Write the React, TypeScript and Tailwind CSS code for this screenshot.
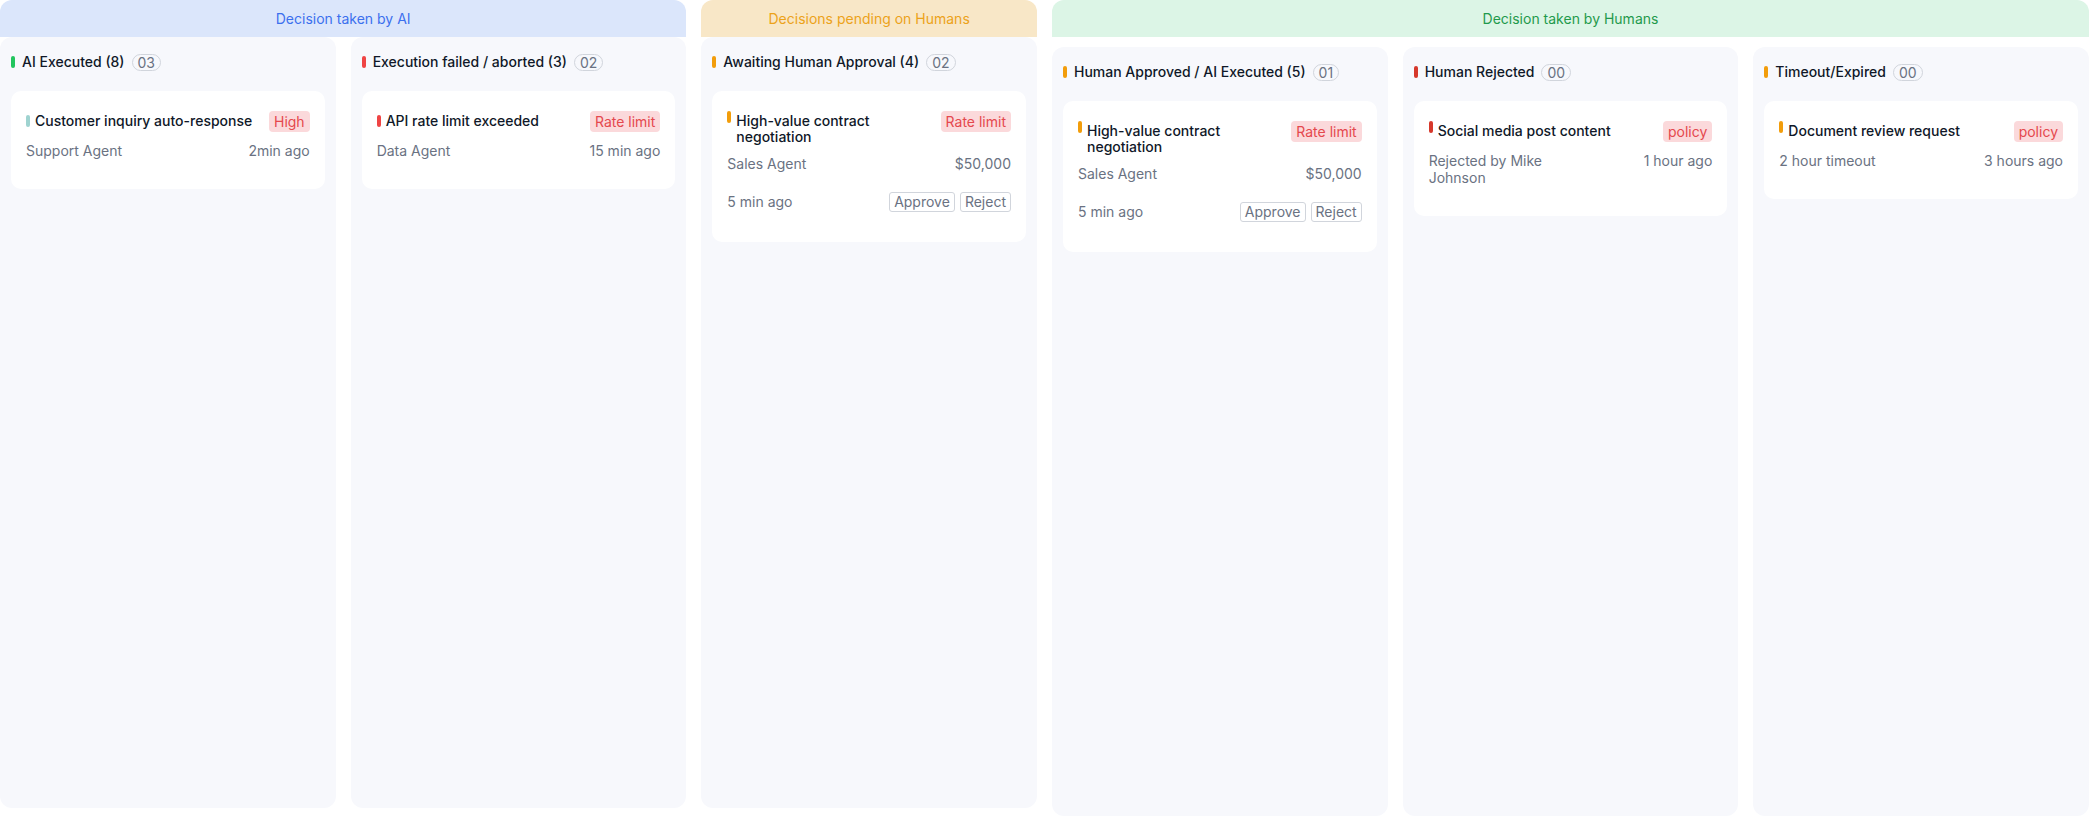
import React from 'react';

type Card = {
  title: string;
  bar: string;
  badge: string;
  left: string;
  right: string;
  centerBar?: boolean;
  actions?: boolean;
};

type Column = {
  title: string;
  count: string;
  bar: string;
  cards: Card[];
};

const contractCard: Card = {
  title: 'High-value contract negotiation',
  bar: 'bg-[#f29d0b]',
  badge: 'Rate limit',
  left: 'Sales Agent',
  right: '$50,000',
  actions: true,
};

const aiColumns: Column[] = [
  {
    title: 'AI Executed (8)',
    count: '03',
    bar: 'bg-[#22c55e]',
    cards: [
      {
        title: 'Customer inquiry auto-response',
        bar: 'bg-[#9fd3d0]',
        badge: 'High',
        left: 'Support Agent',
        right: '2min ago',
        centerBar: true,
      },
    ],
  },
  {
    title: 'Execution failed / aborted (3)',
    count: '02',
    bar: 'bg-[#ef4444]',
    cards: [
      {
        title: 'API rate limit exceeded',
        bar: 'bg-[#ef4444]',
        badge: 'Rate limit',
        left: 'Data Agent',
        right: '15 min ago',
        centerBar: true,
      },
    ],
  },
];

const pendingColumns: Column[] = [
  { title: 'Awaiting Human Approval (4)', count: '02', bar: 'bg-[#f29d0b]', cards: [contractCard] },
];

const humanColumns: Column[] = [
  { title: 'Human Approved / AI Executed (5)', count: '01', bar: 'bg-[#f29d0b]', cards: [contractCard] },
  {
    title: 'Human Rejected',
    count: '00',
    bar: 'bg-[#d6382b]',
    cards: [
      {
        title: 'Social media post content',
        bar: 'bg-[#d6382b]',
        badge: 'policy',
        left: 'Rejected by Mike Johnson',
        right: '1 hour ago',
      },
    ],
  },
  {
    title: 'Timeout/Expired',
    count: '00',
    bar: 'bg-[#f29d0b]',
    cards: [
      {
        title: 'Document review request',
        bar: 'bg-[#f29d0b]',
        badge: 'policy',
        left: '2 hour timeout',
        right: '3 hours ago',
      },
    ],
  },
];

const TaskCard = ({ card }: { card: Card }) => (
  <div className="rounded-[10px] bg-white px-[15px] pt-5 pb-[30px]">
    <div className="flex items-start justify-between gap-2">
      <div className={`flex gap-[5px] ${card.centerBar ? 'items-center mt-[2px]' : 'items-start'}`}>
        <span className={`w-1 h-3 rounded-[2px] shrink-0 ${card.bar}`} />
        <span className={`text-sm leading-4 font-medium text-gray-900 ${card.centerBar ? '' : 'mt-[2px]'}`}>
          {card.title}
        </span>
      </div>
      <span className="shrink-0 h-[21px] px-[5px] rounded-[4px] bg-[#fbd9db] text-[#e5484d] text-sm leading-[21px]">
        {card.badge}
      </span>
    </div>
    <div className="mt-[10px] flex justify-between items-start text-sm leading-[17px] text-gray-500">
      <span className="max-w-[50%]">{card.left}</span>
      <span>{card.right}</span>
    </div>
    {card.actions && (
      <div className="mt-5 flex justify-between items-center text-sm text-gray-500">
        <span className="leading-5">5 min ago</span>
        <div className="flex gap-[5px]">
          <button className="h-5 px-1 rounded-[3px] border border-gray-300 leading-[18px] text-gray-500">
            Approve
          </button>
          <button className="h-5 px-1 rounded-[3px] border border-gray-300 leading-[18px] text-gray-500">
            Reject
          </button>
        </div>
      </div>
    )}
  </div>
);

const BoardColumn = ({ col, human }: { col: Column; human?: boolean }) => (
  <div
    className={`rounded-xl bg-[#f7f8fc] px-[11px] pt-[15px] ${
      human ? 'mt-[10px] h-[769px]' : 'h-[771px]'
    }`}
  >
    <div className="flex items-center gap-[7px] h-5 mb-[19px]">
      <span className={`w-1 h-3 rounded-[2px] ${col.bar}`} />
      <span className="text-sm font-medium text-gray-900 whitespace-nowrap">{col.title}</span>
      <span className="h-[17px] px-[5px] rounded-full border border-gray-300 text-sm leading-[15px] text-gray-500">
        {col.count}
      </span>
    </div>
    <div className="flex flex-col gap-3">
      {col.cards.map((c, i) => (
        <TaskCard key={i} card={c} />
      ))}
    </div>
  </div>
);

const GroupHeader = ({ label, tone }: { label: string; tone: string }) => (
  <div className={`h-[37px] rounded-t-xl flex items-center justify-center text-sm ${tone}`}>{label}</div>
);

export default function App() {
  return (
    <div className="w-[2089px] h-[816px] overflow-hidden bg-white font-['Inter',sans-serif]">
      <div className="grid grid-cols-6 gap-x-[15px]">
        <div className="col-span-2">
          <GroupHeader label="Decision taken by AI" tone="bg-[#dbe6fb] text-[#3b70ee]" />
          <div className="grid grid-cols-2 gap-x-[15px]">
            {aiColumns.map((c) => (
              <BoardColumn key={c.title} col={c} />
            ))}
          </div>
        </div>
        <div className="col-span-1">
          <GroupHeader label="Decisions pending on Humans" tone="bg-[#f8e7c7] text-[#eca21a]" />
          {pendingColumns.map((c) => (
            <BoardColumn key={c.title} col={c} />
          ))}
        </div>
        <div className="col-span-3">
          <GroupHeader label="Decision taken by Humans" tone="bg-[#dcf5e6] text-[#1f9a4c]" />
          <div className="grid grid-cols-3 gap-x-[15px]">
            {humanColumns.map((c) => (
              <BoardColumn key={c.title} col={c} human />
            ))}
          </div>
        </div>
      </div>
    </div>
  );
}
